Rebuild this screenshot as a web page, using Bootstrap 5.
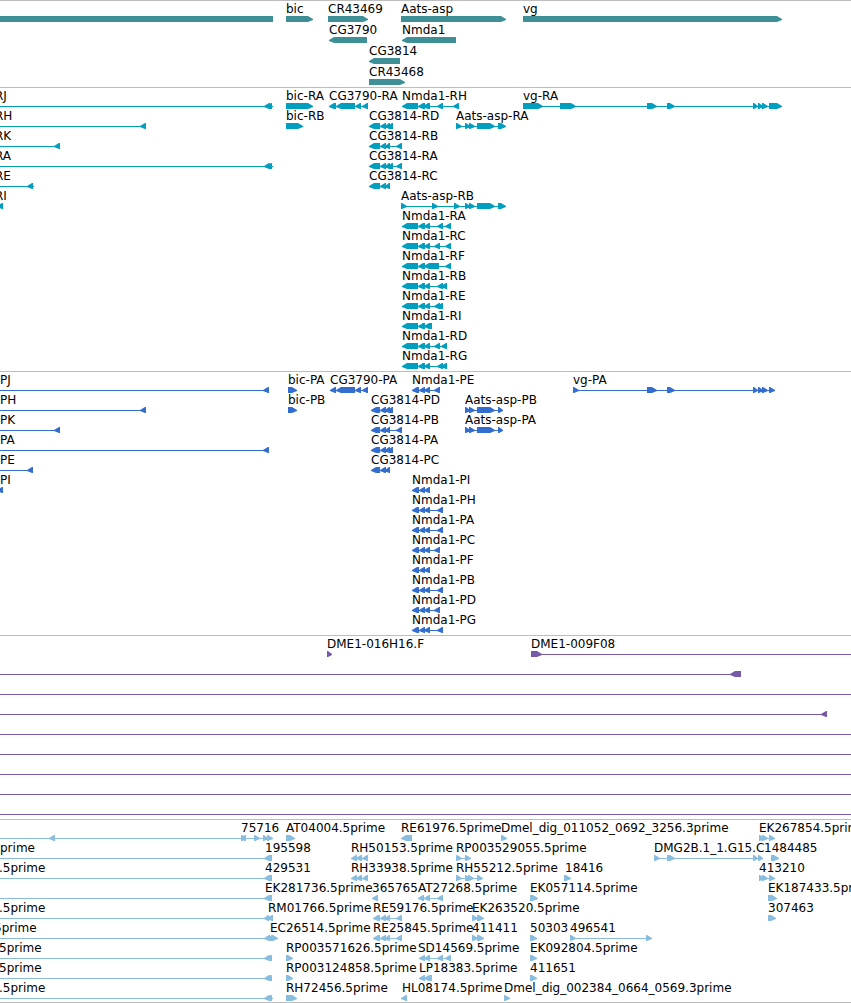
<!DOCTYPE html>
<html lang="en">
<head>
<meta charset="utf-8">
<meta name="viewport" content="width=device-width, initial-scale=1">
<title>Genome browser tracks</title>
<link href="https://cdn.jsdelivr.net/npm/bootstrap@5.3.0/dist/css/bootstrap.min.css" rel="stylesheet">
<script src="https://cdn.jsdelivr.net/npm/bootstrap@5.3.0/dist/js/bootstrap.bundle.min.js"></script>
<style>
  body { font-family: "DejaVu Sans", sans-serif; font-size: 12px; line-height: 16px; color: #000; background: #fff; }
  .track { border-top: 1px solid #bdbdbd; padding-bottom: 3px; color: var(--ink); }
  .track-tight { padding-bottom: 2px; }
  .track-last { border-bottom: 1px solid #bdbdbd; }
  .lane { height: 20px; }
  .lane-tall { height: 21px; }
  .lane svg { height: 22px; fill: currentColor; overflow: visible; }
  .feature-name { color: #000; white-space: nowrap; z-index: 1; }
  .genes { --ink: #3f8f96; }
  .transcripts { --ink: #009fc0; }
  .proteins { --ink: #326dcf; }
  .clones { --ink: #7858a8; }
  .ests { --ink: #88bde0; }
</style>
</head>
<body>
<main class="w-100 overflow-hidden" id="tracks"></main>
<script>
// Each lane lists its features as "name,nameX,parts", separated by ";".
// A part is "a>b" (forward block), "a<b" (reverse block), "a=b" (plain bar)
// or a bare position that only extends the connecting line.
const L = '-9 ', R = ' 9000';
const A = '369<380 380<386 385<390', N = '402<418 418<425 424<430';
const PA = '371<380 380<386 385<390', PN = '412<419 419<425 424<430';
const tracks = [
  { cls: 'genes track-tight', lane: 'lane-tall', lanes: [
    ',0,-30=273;bic,286,286>313;CR43469,328,328>368;Aats-asp,401,401>506;vg,523,523>782',
    'CG3790,329,329<367;Nmda1,402,402<456',
    'CG3814,369,369<400',
    'CR43468,369,369>405' ] },
  { cls: 'transcripts', lanes: [
    'RJ,-5,' + L + '264<270 268<272 273;bic-RA,286,286>313;CG3790-RA,329,329<336 336<355 355<361 362<368;Nmda1-RH,402,402<418 418<425 423<430 437<443 453<459;vg-RA,523,523>543 560>576 647>657 667>675 753>758 758>763 762>768 769>782',
    'RH,-5,' + L + '140<146;bic-RB,286,286>303;CG3814-RD,369,' + A + ' 388<393;Aats-asp-RA,456,456>462 465>470 469>475 477>495 498>506',
    'RK,-5,' + L + '54<60;CG3814-RB,369,' + A + ' 396<402',
    'RA,-5,' + L + '264<270 268<272 273;CG3814-RA,369,' + A + ' 388<393 396<402',
    'RE,-5,' + L + '27<33 34;CG3814-RC,369,' + A,
    'RI,-5,-3<3;Aats-asp-RB,401,401>407 432>438 454>460 465>470 469>475 477>495 498>506',
    'Nmda1-RA,402,' + N + ' 437<443 445<451',
    'Nmda1-RC,402,' + N + ' 434<440 445<451',
    'Nmda1-RF,402,402<418 418<425 424<439 445<451',
    'Nmda1-RB,402,' + N + ' 437<443 441<447',
    'Nmda1-RE,402,' + N + ' 434<440 437<443',
    'Nmda1-RI,402,402<418 418<425 424<432',
    'Nmda1-RD,402,' + N + ' 434<440 441<447',
    'Nmda1-RG,402,' + N + ' 437<443 441<447' ] },
  { cls: 'proteins', lanes: [
    'PJ,0,' + L + '263<269;bic-PA,288,288>297;CG3790-PA,330,330<336 336<355 355<361 362<368;Nmda1-PE,412,' + PN + ' 434<440;vg-PA,573,573>579 647>657 667>675 753>758 758>763 762>768 769>775',
    'PH,0,' + L + '140<146;bic-PB,288,288>297;CG3814-PD,371,' + PA + ' 388<393;Aats-asp-PB,465,465>470 469>475 477>495 498>503',
    'PK,0,' + L + '54<60;CG3814-PB,371,' + PA + ' 396<402;Aats-asp-PA,465,465>470 469>475 477>495 498>503',
    'PA,0,' + L + '263<269;CG3814-PA,371,' + PA + ' 388<393',
    'PE,0,' + L + '27<33;CG3814-PC,371,' + PA,
    'PI,0,-3<3;Nmda1-PI,412,' + PN,
    'Nmda1-PH,412,' + PN + ' 437<443',
    'Nmda1-PA,412,' + PN + ' 437<443',
    'Nmda1-PC,412,' + PN + ' 434<440',
    'Nmda1-PF,412,' + PN,
    'Nmda1-PB,412,' + PN + ' 437<443',
    'Nmda1-PD,412,' + PN + ' 434<440',
    'Nmda1-PG,412,' + PN + ' 437<443' ] },
  { cls: 'clones', lanes: [
    'DME1-016H16.F,327,327>332;DME1-009F08,531,531>542' + R,
    ',0,' + L + '730<741',
    ',0,' + L + R,
    ',0,' + L + '821<827',
    ',0,' + L + R, ',0,' + L + R, ',0,' + L + R, ',0,' + L + R, ',0,' + L + R ] },
  { cls: 'ests track-tight track-last', lanes: [
    '75716,241,' + L + '49<55 240<246 241>247 254>260 263>268 267>273;AT04004.5prime,286,286>295;RE61976.5prime,401,401<412;Dmel_dig_011052_0692_3256.3prime,501,501>507;EK267854.5prime,759,759>764 762>768 769>775',
    'prime,0,' + L + '264<272;195598,265,;RH50153.5prime,351,351<357 356<362 362<368;RP003529055.5prime,456,456>462 465>471;DMG2B.1_1.G15.C,654,654>660 667>675 753>758 758>763;1484485,764,771>779',
    '.5prime,-1,' + L + '264<272;429531,265,;RH33938.5prime,351,351<357 356<362 362<368;RH55212.5prime,456,456>462 465>470 468>474 477>483;18416,565,564>571;413210,759,759>764 762>768 769>775',
    'EK281736.5prime,265,' + L + '264<272;365765,372,372<378;AT27268.5prime,418,418<424 424<430 437<443;EK057114.5prime,530,530>538;EK187433.5prime,768,768>777',
    '.5prime,-1,' + L + '264<269 267<273;RM01766.5prime,268,;RE59176.5prime,373,373<380 380<386 385<390 396<402;EK263520.5prime,472,472>478 477>484;307463,768,768>776',
    '5prime,-6,' + L + '264<270 267<273 271>278;EC26514.5prime,270,;RE25845.5prime,373,373<380 380<386 385<390 396<402;411411,472,472>478 477>484;50303,530,530>537;496541,570,570>576 646>652',
    '5prime,-1,' + L + '264<270 267<272;RP003571626.5prime,286,286>293;SD14569.5prime,418,419<425 424<430 437<443 445<451;EK092804.5prime,530,530>537',
    '5prime,-1,' + L + '264<270 267<272;RP003124858.5prime,286,286>293;LP18383.5prime,419,419<425 424<432;411651,530,530>537',
    '.5prime,-1,' + L + '264<270 267<272 273;RH72456.5prime,286,286>297;HL08174.5prime,402,401<407;Dmel_dig_002384_0664_0569.3prime,504,504>510' ] }
];

// Every outline runs clockwise, so overlapping parts add up to one solid shape.
function block(a, kind, b) {
  const h = Math.min(6, b - a);
  if (kind === '=') return `M${a} 15H${b}V21H${a}Z`;
  if (kind === '>') return `M${a} 15H${b - h + 1}L${b} 18V19L${b - h + 1} 21H${a}Z`;
  return `M${b} 15V21H${a + h - 1}L${a} 19V18L${a + h - 1} 15Z`;
}

document.getElementById('tracks').innerHTML = tracks.map(t =>
  `<section class="track ${t.cls}">` + t.lanes.map(lane => {
    let path = '', names = '';
    for (const f of lane.split(';')) {
      const [name, x, parts] = f.split(',');
      if (name) names += `<span class="feature-name position-absolute top-0" style="left:${x}px">${name}</span>`;
      if (!parts) continue;
      const ends = [];
      for (const p of parts.trim().split(/\s+/)) {
        const m = p.match(/^(-?\d+)(?:([<>=])(-?\d+))?$/);
        ends.push(+m[1]);
        if (m[2]) { ends.push(+m[3]); path += block(+m[1], m[2], +m[3]); }
      }
      const from = Math.min(...ends), to = Math.max(...ends);
      path += `M${from} 18H${to}V19H${from}Z`;
    }
    return `<div class="lane ${t.lane || ''} position-relative"><svg class="d-block w-100" aria-hidden="true"><path d="${path}"/></svg>${names}</div>`;
  }).join('') + '</section>').join('');
</script>
</body>
</html>
